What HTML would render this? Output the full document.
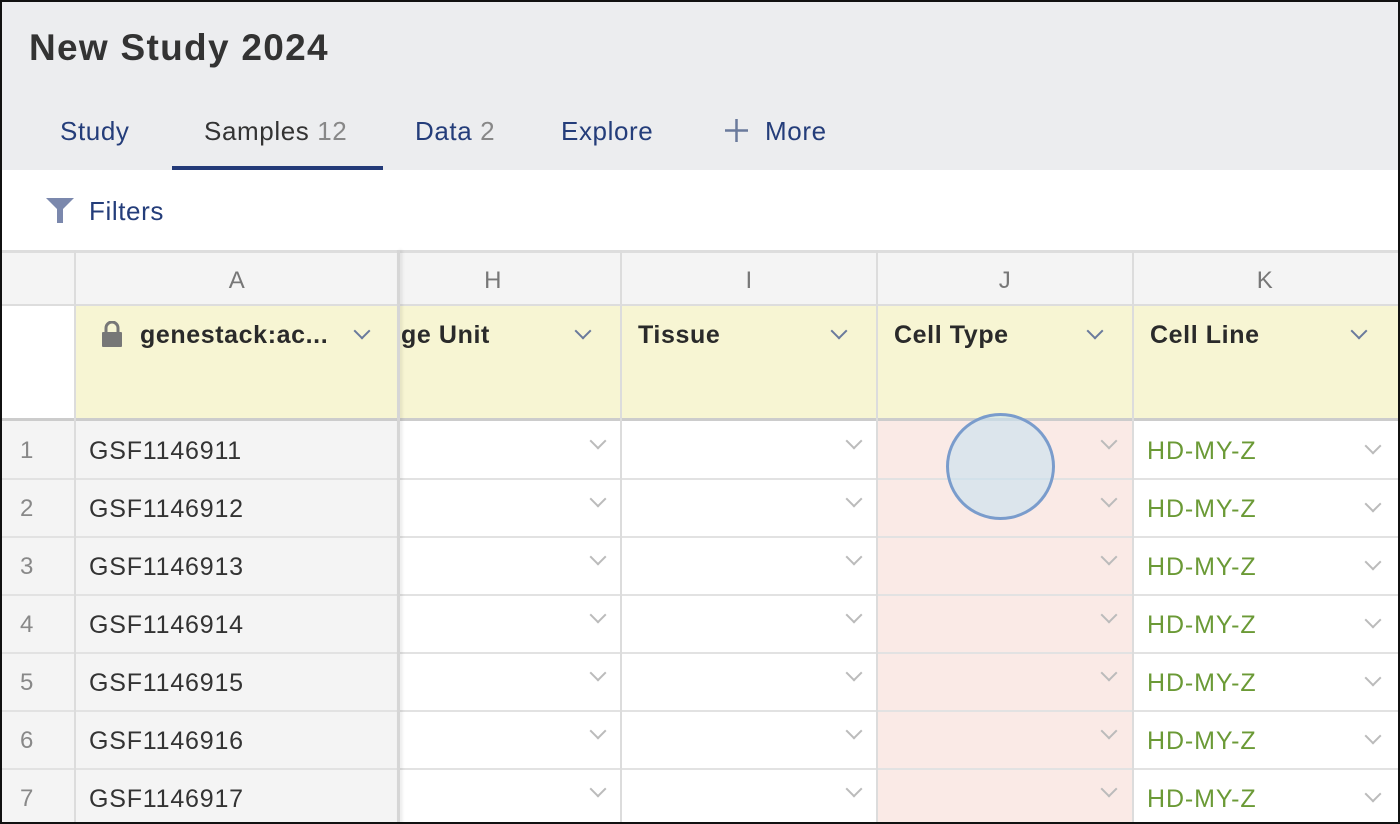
<!DOCTYPE html>
<html><head><style>
*{box-sizing:border-box;margin:0;padding:0}
body{width:1400px;height:824px;overflow:hidden;font-family:"Liberation Sans",sans-serif;background:#fff;position:relative;letter-spacing:0.4px}
.a{position:absolute}
.frame{position:absolute;left:0;top:0;width:1400px;height:824px;border:2px solid #111;pointer-events:none;z-index:10}
.tab{position:absolute;top:116px;font-size:26px;color:#243d7a;letter-spacing:0.6px}
.vl{position:absolute;width:2px;background:#dcdcdc}
.hl{position:absolute;height:2px;background:#e2e2e2;left:0;width:1400px}
.col{position:absolute;top:267px;font-size:24px;color:#777;text-align:center}
.hd{position:absolute;top:321px;font-size:25px;font-weight:bold;color:#2a2a2a;letter-spacing:0.6px}
.chev{position:absolute;width:12px;height:12px;border-right:2px solid;border-bottom:2px solid;transform:rotate(45deg)}
.rn{position:absolute;left:20px;font-size:24px;color:#888}
.id{position:absolute;left:89px;font-size:25px;color:#333;letter-spacing:0.8px}
.g{position:absolute;left:1147px;font-size:25px;color:#6b9a36;letter-spacing:0.9px}
</style></head><body>
<div class="a" style="left:0;top:0;width:1400px;height:170px;background:#ecedef"></div>
<div class="a" style="left:29px;top:27px;font-size:37px;font-weight:bold;color:#333;letter-spacing:1.3px">New Study 2024</div>
<div class="tab" style="left:60px">Study</div>
<div class="tab" style="left:204px;color:#333">Samples <span style="color:#888">12</span></div>
<div class="tab" style="left:415px">Data <span style="color:#888">2</span></div>
<div class="tab" style="left:561px">Explore</div>
<svg class="a" style="left:724px;top:118px" width="25" height="25"><path d="M12.5 1V24M1 12.5H24" stroke="#6a7a9c" stroke-width="2.5"/></svg>
<div class="tab" style="left:765px">More</div>
<div class="a" style="left:172px;top:166px;width:211px;height:4px;background:#233a78"></div>
<svg class="a" style="left:45px;top:197px" width="30" height="27"><path d="M1 1H29L18 12V26H12V12Z" fill="#7b88ad"/></svg>
<div class="a" style="left:89px;top:196px;font-size:26px;color:#243d7a;letter-spacing:0.6px">Filters</div>
<div class="a" style="left:0;top:250px;width:1400px;height:55px;background:#f4f4f4"></div>
<div class="a" style="left:0;top:250px;width:1400px;height:3px;background:#ddd"></div>
<div class="a" style="left:75px;top:305px;width:1325px;height:113px;background:#f7f5d3"></div>
<div class="a" style="left:0;top:421px;width:399px;height:403px;background:#f4f4f4"></div>
<div class="a" style="left:877px;top:421px;width:256px;height:403px;background:#faeae6"></div>
<div class="hl" style="top:304px;background:#ddd"></div>
<div class="a" style="left:0;top:418px;width:1400px;height:3px;background:#ccc"></div>
<div class="hl" style="top:478px"></div><div class="hl" style="top:536px"></div><div class="hl" style="top:594px"></div>
<div class="hl" style="top:652px"></div><div class="hl" style="top:710px"></div><div class="hl" style="top:768px"></div>
<div class="vl" style="left:74px;top:250px;height:574px"></div>
<div class="vl" style="left:620px;top:250px;height:574px"></div>
<div class="vl" style="left:876px;top:250px;height:574px"></div>
<div class="vl" style="left:1132px;top:250px;height:574px"></div>
<div class="col" style="left:75px;width:324px">A</div>
<div class="col" style="left:382px;width:222px">H</div>
<div class="vl" style="left:397px;top:250px;height:574px;width:3px;background:#d6d6d6;box-shadow:2px 0 3px rgba(0,0,0,.1)"></div>
<div class="col" style="left:621px;width:256px">I</div>
<div class="col" style="left:877px;width:256px">J</div>
<div class="col" style="left:1133px;width:264px">K</div>
<svg class="a" style="left:101px;top:321px" width="22" height="26"><path d="M5 11V7a6 6 0 0 1 12 0v4" fill="none" stroke="#777" stroke-width="3"/><rect x="1" y="11" width="20" height="15" rx="1" fill="#777"/></svg>
<div class="hd" style="left:140px">genestack:ac...</div>
<div class="hd" style="left:401px">ge Unit</div>
<div class="hd" style="left:638px">Tissue</div>
<div class="hd" style="left:894px">Cell Type</div>
<div class="hd" style="left:1150px">Cell Line</div>
<div class="chev" style="left:356px;top:325px;color:#6a7a9c"></div>
<div class="chev" style="left:577px;top:325px;color:#6a7a9c"></div>
<div class="chev" style="left:833px;top:325px;color:#6a7a9c"></div>
<div class="chev" style="left:1089px;top:325px;color:#6a7a9c"></div>
<div class="chev" style="left:1353px;top:325px;color:#6a7a9c"></div>
<div class="rn" style="top:437px">1</div><div class="id" style="top:437px">GSF1146911</div><div class="g" style="top:437px">HD-MY-Z</div>
<div class="rn" style="top:495px">2</div><div class="id" style="top:495px">GSF1146912</div><div class="g" style="top:495px">HD-MY-Z</div>
<div class="rn" style="top:553px">3</div><div class="id" style="top:553px">GSF1146913</div><div class="g" style="top:553px">HD-MY-Z</div>
<div class="rn" style="top:611px">4</div><div class="id" style="top:611px">GSF1146914</div><div class="g" style="top:611px">HD-MY-Z</div>
<div class="rn" style="top:669px">5</div><div class="id" style="top:669px">GSF1146915</div><div class="g" style="top:669px">HD-MY-Z</div>
<div class="rn" style="top:727px">6</div><div class="id" style="top:727px">GSF1146916</div><div class="g" style="top:727px">HD-MY-Z</div>
<div class="rn" style="top:785px">7</div><div class="id" style="top:785px">GSF1146917</div><div class="g" style="top:785px">HD-MY-Z</div>
<div id="chevs"></div>
<script>
var h='';for(var i=0;i<7;i++){var t=435+i*58;[592,848,1103].forEach(function(x){h+='<div class="chev" style="left:'+x+'px;top:'+t+'px;color:#bbb"></div>'});h+='<div class="chev" style="left:1367px;top:'+(t+5)+'px;color:#bbb"></div>'}
document.getElementById('chevs').innerHTML=h;
</script>
<div class="a" style="left:946px;top:413px;width:109px;height:107px;border-radius:50%;background:rgba(200,225,240,.6);border:3px solid #7a9ccc"></div>
<div class="frame"></div>
</body></html>
